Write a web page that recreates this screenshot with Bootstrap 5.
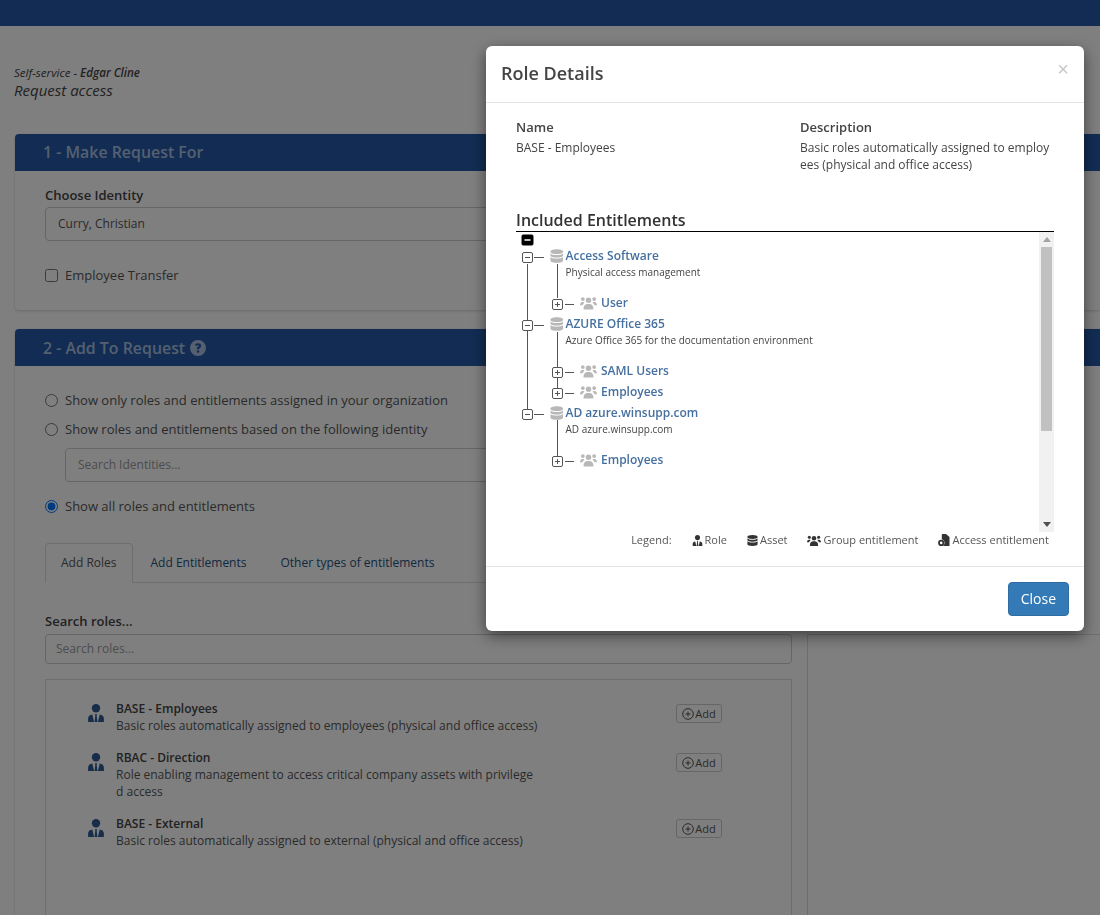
<!DOCTYPE html>
<html lang="en">
<head>
<meta charset="utf-8">
<title>Request access</title>
<link href="https://cdn.jsdelivr.net/npm/bootstrap@5.3.0/dist/css/bootstrap.min.css" rel="stylesheet">
<style>
html,body{height:915px;overflow:hidden}
body{font-family:"Open Sans","Liberation Sans",sans-serif;font-size:13px;color:#444;background:#fff}
.top-strip{height:26px;background:#2559a8}
.page-wrap{padding:40px 0 0 15px;height:889px;overflow:hidden}
.crumb-a{font-size:11.6px;line-height:14px;font-style:italic;color:#444;margin-left:-1px}
.crumb-b{font-size:15px;line-height:20px;font-style:italic;color:#444;margin:0 0 0 -1px}
.step-card{border-radius:4px 0 0 4px;border:0;box-shadow:0 1px 3px rgba(0,0,0,.18);overflow:hidden}
.step-one{margin-top:34px;height:176px}
.step-two{margin-top:19px;height:586px;border-radius:4px 0 0 0}
.step-head{background:#2559a8;color:#a9c0e0;height:37px;font-size:15.9px;font-weight:600;line-height:36px;padding:0 0 0 28px;display:flex;align-items:center;gap:5px;flex:none}
.step-one .step-head{padding-bottom:2px}
.step-body{padding:15px 0 0 30px}
.fld-label{font-size:13px;font-weight:600;line-height:18px;color:#444;margin-bottom:3px;display:block}
.fld-input{height:34px;font-size:12px;padding:0 12px 2px;border-radius:4px;color:#555;border:1px solid #ccc;width:1000px;box-shadow:none}
.fld-input::placeholder{color:#999}
.chk-row{display:flex;align-items:center;gap:7px;font-size:13px;line-height:18px;color:#555}
.chk-row input{width:13px;height:13px;margin:0}
.chk-gap{margin-top:25px}
.step-body.radio-block{padding-top:25px}
.radio-gap{margin-bottom:11px}
.search-indent{margin:10px 0 15px;padding-left:20px}
.tab-strip{margin-top:28px;width:1000px;--bs-nav-tabs-border-color:#ddd;font-size:12px}
.tab-strip .nav-link{padding:10px 15px;line-height:18px;color:#23527c;margin-right:2px;border-radius:4px 4px 0 0}
.tab-strip .nav-link.active{color:#555;border-color:#ddd #ddd #fff}
.lower-split{display:flex;gap:15px;margin-top:29px}
.lower-main{width:747px;flex:none}
.lower-side{flex:1;margin-top:22px;border-top:1px solid #ddd;border-left:1px solid #ddd;height:300px}
.fld-input.role-search{height:30px;padding:0 10px 2px;margin-top:4px}
.role-box{margin-top:15px;border:1px solid #ddd;height:260px;padding:20px 0 0 42px}
.role-line{display:flex;width:634px;margin-bottom:15px}
.role-icon{width:16px;height:18px;flex:none;margin:4px 12px 0 0}
.role-text{width:424px;word-break:break-all;font-size:12px;line-height:17px;color:#555}
.role-text b{font-weight:600;display:block;color:#444}
.add-chip{margin:4px 0 0 auto;height:19px;width:46px;padding:0;font-size:11px;line-height:17px;border:1px solid #ccc;border-radius:3px;background:#fff;color:#555;display:flex;align-items:center;justify-content:center;gap:1px}
.dialog-fix{max-width:598px;width:598px;margin:46px 16px 0 auto}
.dialog-shell{border:0;border-radius:6px;box-shadow:0 5px 15px rgba(0,0,0,.5);height:585px}
.dlg-head{height:57px;padding:0 15px;border-bottom:1px solid #e5e5e5;display:flex;align-items:center;justify-content:space-between}
.dlg-title{font-size:18px;font-weight:600;color:#444;margin:0}
.dlg-x{font-size:20px;line-height:20px;color:#c8c8c8;font-weight:400;margin:-10px 0 0;background:none;border:0;padding:0;font-family:"Liberation Sans",sans-serif}
.dlg-body{padding:15px 30px 0;height:463px}
.dlg-cols{display:flex}
.dlg-left{width:284px}
.dlg-right{width:254px;word-break:break-all}
.dt{font-size:13px;font-weight:600;line-height:18px;color:#444;margin-bottom:3px}
.dd{font-size:12px;line-height:17px;color:#444;margin:0}
.ent-title{font-size:16px;font-weight:600;line-height:22px;color:#333;margin:36px 0 0;border-bottom:1px solid #000}
.tree-frame{display:flex;height:300px}
.tree-pane{flex:1;position:relative;overflow:hidden}
.tree-lines{position:absolute;left:0;top:0}
.tree-stack{position:relative;padding-top:14px}
.t-parent{padding-left:34px;height:20px;display:flex;align-items:center;font-size:12px;font-weight:600;color:#46709f;line-height:20px}
.t-parent svg{flex:none;margin-right:2px}
.t-desc{padding-left:49.5px;font-size:10px;line-height:13px;color:#444;margin-bottom:13.25px}
.t-child{padding-left:64px;height:21.5px;display:flex;align-items:center;font-size:12px;font-weight:600;color:#46709f}
.t-child svg{flex:none;margin-right:4px}
.sbar{width:15px;background:#f1f1f1;display:flex;flex-direction:column;align-items:center;flex:none}
.sbar-up{width:0;height:0;border:4px solid transparent;border-top:0;border-bottom:5px solid #a3a3a3;margin-top:5px}
.sbar-down{width:0;height:0;border:4px solid transparent;border-bottom:0;border-top:5px solid #505050;margin-top:auto;margin-bottom:5px}
.sbar-thumb{width:11px;height:184px;background:#c1c1c1;margin-top:5px}
.legend-row{display:flex;justify-content:flex-end;align-items:center;gap:20px;font-size:11px;line-height:16px;color:#555;padding-right:5px}
.legend-row span{display:inline-flex;align-items:center;gap:2px}
.dlg-foot{border-top:1px solid #e5e5e5;height:65px;padding:15px;display:flex;justify-content:flex-end;align-items:flex-start}
.btn-close-blue{background:#337ab7;border:1px solid #2e6da4;color:#fff;font-size:14px;height:34px;line-height:20px;padding:6px 12px;border-radius:4px}
.modal-backdrop.show{opacity:.5}
</style>
</head>
<body>
<svg width="0" height="0" class="d-none" aria-hidden="true"><defs>
<symbol id="i-db" viewBox="0 0 14 14"><path d="M7 0C3.4 0 .5 1 .5 2.2v.6C.5 4 3.4 5 7 5s6.5-1 6.5-2.2v-.6C13.5 1 10.6 0 7 0z"/><path d="M.5 4.300v2.100C.5 7.600 3.400 8.600 7 8.600s6.500-1 6.500-2.200V4.300C12.600 5.400 10 6 7 6S1.400 5.400.5 4.300z"/><path d="M.5 8v3.800C.5 13 3.400 14 7 14s6.500-1 6.500-2.200V8c-.9 1.100-3.500 1.700-6.500 1.700S1.400 9.100.5 8z"/></symbol>
<symbol id="i-grp" viewBox="0 0 18 14"><circle cx="9" cy="4.200" r="2.900"/><path d="M3.800 14v-1.800C3.800 9.800 5.600 8 8 8h2c2.400 0 4.200 1.800 4.200 4.200V14z"/><circle cx="3" cy="2.800" r="2"/><path d="M0 9.300C0 7.500 1 6 2.500 6h1c.5 0 .9.100 1.200.4-.5.800-1.600 1.800-2 3z"/><circle cx="15" cy="2.800" r="2"/><path d="M18 9.300C18 7.500 17 6 15.500 6h-1c-.5 0-.9.100-1.200.4.500.8 1.600 1.800 2 3z"/></symbol>
<symbol id="i-role" viewBox="0 0 14 16"><circle cx="7" cy="3.800" r="3.700"/><path d="M0 16v-3.200c0-1.800 1.400-3.200 3.700-3.500L5.300 16zM14 16v-3.200c0-1.800-1.400-3.200-3.700-3.500L8.700 16zM6 9.200h2l-.4 1.300.7 5.500H5.700l.7-5.500z"/></symbol>
<symbol id="i-acc" viewBox="0 0 12 12"><path d="M4.500 0H8l3.500 3v9H5c1-.8 1.600-1.900 1.600-3 0-2-1.300-3.400-2.800-3.800V1c0-.6.300-1 .7-1z"/><path fill-rule="evenodd" d="M3.200 5.800A3.100 3.100 0 1 0 3.200 12a3.100 3.100 0 0 0 0-6.200zm0 1.800a1.300 1.300 0 1 1 0 2.600 1.300 1.300 0 0 1 0-2.600z"/></symbol>
<symbol id="i-help" viewBox="0 0 16 16"><path fill-rule="evenodd" d="M8 0a8 8 0 1 0 0 16A8 8 0 0 0 8 0zm0 12.800a1.300 1.300 0 1 1 0-2.600 1.300 1.300 0 0 1 0 2.600zm1.300-3.800v.3H6.700V8.600c0-1.500 1.900-1.700 1.900-2.600 0-.4-.3-.7-.8-.7-.5 0-1 .3-1.400.8L4.900 4.800C5.600 3.800 6.700 3.200 8.100 3.200c1.800 0 3.100 1 3.100 2.600 0 1.900-1.900 2.300-1.900 3.200z"/></symbol>
<symbol id="i-add" viewBox="0 0 12 12"><circle cx="6" cy="6" r="5.300" fill="none" stroke="currentColor"/><path d="M6 3.500v5M3.500 6h5" fill="none" stroke="currentColor"/></symbol>
</defs></svg>

<div class="top-strip"></div>
<main class="page-wrap">
  <div class="crumb-a">Self-service - <b class="fw-semibold">Edgar Cline</b></div>
  <div class="crumb-b">Request access</div>

  <section class="card step-card step-one">
    <div class="step-head">1 - Make Request For</div>
    <div class="step-body">
      <label class="fld-label" for="identity">Choose Identity</label>
      <input id="identity" class="form-control fld-input" value="Curry, Christian">
      <label class="chk-row chk-gap"><input type="checkbox"> Employee Transfer</label>
    </div>
  </section>

  <section class="card step-card step-two">
    <div class="step-head">2 - Add To Request <svg width="16" height="16" fill="currentColor"><use href="#i-help"/></svg></div>
    <div class="step-body radio-block">
      <label class="chk-row radio-gap"><input type="radio" name="scope"> Show only roles and entitlements assigned in your organization</label>
      <label class="chk-row"><input type="radio" name="scope"> Show roles and entitlements based on the following identity</label>
      <div class="search-indent"><input class="form-control fld-input" placeholder="Search Identities..."></div>
      <label class="chk-row"><input type="radio" name="scope" checked> Show all roles and entitlements</label>

      <ul class="nav nav-tabs tab-strip">
        <li class="nav-item"><a class="nav-link active" href="#">Add Roles</a></li>
        <li class="nav-item"><a class="nav-link" href="#">Add Entitlements</a></li>
        <li class="nav-item"><a class="nav-link" href="#">Other types of entitlements</a></li>
      </ul>

      <div class="lower-split">
        <div class="lower-main">
          <label class="fld-label" for="roles">Search roles...</label>
          <input id="roles" class="form-control fld-input role-search w-100" placeholder="Search roles...">
          <div class="role-box">
            <div class="role-line">
              <svg class="role-icon" fill="#2f5a93"><use href="#i-role"/></svg>
              <div class="role-text"><b>BASE - Employees</b>Basic roles automatically assigned to employees (physical and office access)</div>
              <button class="add-chip"><svg width="12" height="12"><use href="#i-add"/></svg>Add</button>
            </div>
            <div class="role-line">
              <svg class="role-icon" fill="#2f5a93"><use href="#i-role"/></svg>
              <div class="role-text"><b>RBAC - Direction</b>Role enabling management to access critical company assets with privileged access</div>
              <button class="add-chip"><svg width="12" height="12"><use href="#i-add"/></svg>Add</button>
            </div>
            <div class="role-line">
              <svg class="role-icon" fill="#2f5a93"><use href="#i-role"/></svg>
              <div class="role-text"><b>BASE - External</b>Basic roles automatically assigned to external (physical and office access)</div>
              <button class="add-chip"><svg width="12" height="12"><use href="#i-add"/></svg>Add</button>
            </div>
          </div>
        </div>
        <div class="lower-side"></div>
      </div>
    </div>
  </section>
</main>

<div class="modal-backdrop fade show"></div>
<div class="modal fade show d-block overflow-hidden" tabindex="-1" role="dialog" aria-modal="true">
  <div class="modal-dialog dialog-fix">
    <div class="modal-content dialog-shell">
      <div class="dlg-head">
        <h5 class="dlg-title">Role Details</h5>
        <button class="dlg-x" aria-label="Close">×</button>
      </div>
      <div class="dlg-body">
        <div class="dlg-cols">
          <div class="dlg-left"><div class="dt">Name</div><p class="dd">BASE - Employees</p></div>
          <div class="dlg-right"><div class="dt">Description</div><p class="dd">Basic roles automatically assigned to employees (physical and office access)</p></div>
        </div>
        <h6 class="ent-title">Included Entitlements</h6>
        <div class="tree-frame">
          <div class="tree-pane">
            <svg class="tree-lines" width="100" height="298" fill="none" stroke="#555" stroke-width="1">
              <rect x="6" y="3" width="11" height="10" rx="1" fill="#000" stroke="#000"/>
              <path d="M8.5 8h6" stroke="#fff" stroke-width="1.5"/>
              <g transform="translate(0,-232)">
                <path d="M11.5 264V320M11.5 331V409M18 257.500h10M41.5 264V298M41.5 332V367M41.5 378V388M41.5 420V456M49 304.500h9M18 325.500h10M49 372.500h9M49 393.500h9M18 414.500h10M49 461.500h9"/>
                <g fill="#fff">
                  <rect x="6.5" y="252.500" width="10" height="10" rx="1.500"/>
                  <rect x="6.5" y="320.500" width="10" height="10" rx="1.500"/>
                  <rect x="6.5" y="409.500" width="10" height="10" rx="1.500"/>
                  <rect x="36.5" y="299.500" width="10" height="10" rx="1.500"/>
                  <rect x="36.5" y="367.500" width="10" height="10" rx="1.500"/>
                  <rect x="36.5" y="388.500" width="10" height="10" rx="1.500"/>
                  <rect x="36.5" y="456.500" width="10" height="10" rx="1.500"/>
                </g>
                <path d="M9 257.500h5M9 325.500h5M9 414.500h5M39 304.500h5M41.500 302v5M39 372.500h5M41.500 370v5M39 393.500h5M41.500 391v5M39 461.500h5M41.500 459v5"/>
              </g>
            </svg>
            <div class="tree-stack">
              <div class="t-parent"><svg width="13.5" height="14" fill="#b8b8b8"><use href="#i-db"/></svg>Access Software</div>
              <div class="t-desc">Physical access management</div>
              <div class="t-child"><svg width="17" height="14" fill="#b8b8b8"><use href="#i-grp"/></svg>User</div>
              <div class="t-parent"><svg width="13.5" height="14" fill="#b8b8b8"><use href="#i-db"/></svg>AZURE Office 365</div>
              <div class="t-desc">Azure Office 365 for the documentation environment</div>
              <div class="t-child"><svg width="17" height="14" fill="#b8b8b8"><use href="#i-grp"/></svg>SAML Users</div>
              <div class="t-child"><svg width="17" height="14" fill="#b8b8b8"><use href="#i-grp"/></svg>Employees</div>
              <div class="t-parent"><svg width="13.5" height="14" fill="#b8b8b8"><use href="#i-db"/></svg>AD azure.winsupp.com</div>
              <div class="t-desc">AD azure.winsupp.com</div>
              <div class="t-child"><svg width="17" height="14" fill="#b8b8b8"><use href="#i-grp"/></svg>Employees</div>
            </div>
          </div>
          <div class="sbar"><i class="sbar-up"></i><i class="sbar-thumb"></i><i class="sbar-down"></i></div>
        </div>
        <div class="legend-row">
          <span>Legend:</span>
          <span><svg width="11" height="11" fill="#333"><use href="#i-role"/></svg>Role</span>
          <span><svg width="11" height="11" fill="#333"><use href="#i-db"/></svg>Asset</span>
          <span><svg width="14" height="11" fill="#333"><use href="#i-grp"/></svg>Group entitlement</span>
          <span><svg width="12" height="12" fill="#333"><use href="#i-acc"/></svg>Access entitlement</span>
        </div>
      </div>
      <div class="dlg-foot"><button class="btn-close-blue btn">Close</button></div>
    </div>
  </div>
</div>
<script src="https://cdn.jsdelivr.net/npm/bootstrap@5.3.0/dist/js/bootstrap.bundle.min.js"></script>
</body>
</html>
